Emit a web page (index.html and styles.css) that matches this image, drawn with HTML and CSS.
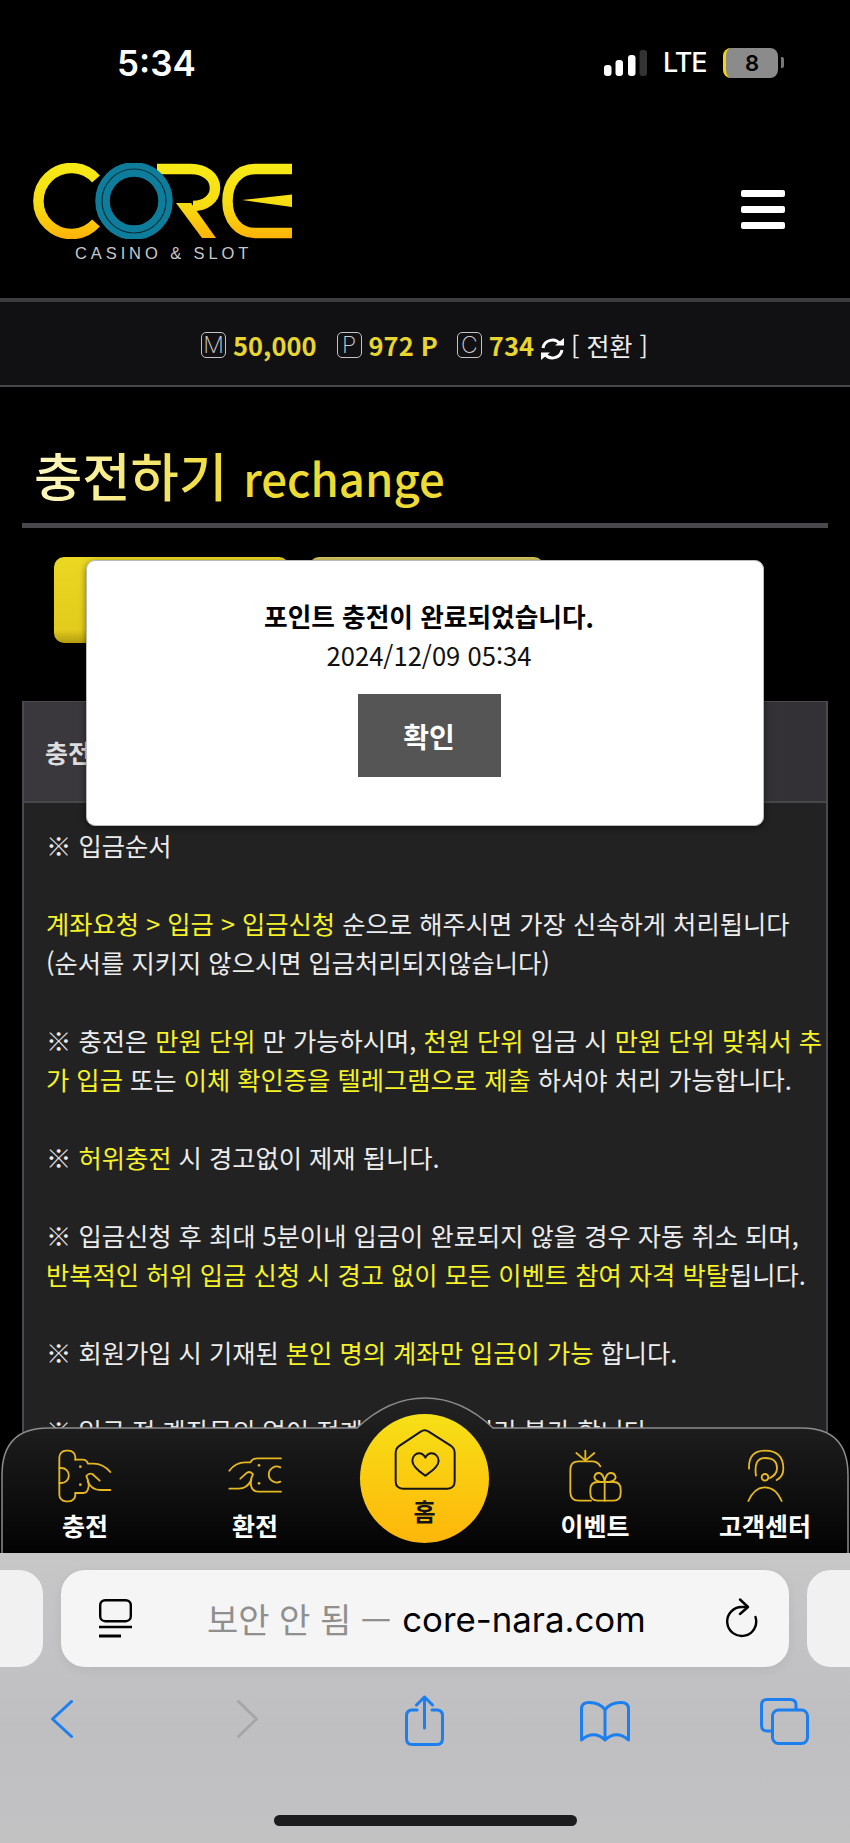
FILE: index.html
```html
<!DOCTYPE html>
<html lang="ko">
<head>
    <meta charset="UTF-8">
    <meta name="viewport" content="width=device-width, initial-scale=1.0">
    <title>CORE Casino &amp; Slot - 충전하기</title>
    <link rel="stylesheet" href="styles.css">
</head>
<body>
    <div class="page">
        <div class="content">
            <header class="top">
                <!-- Status bar -->
                <div class="status">
                    <span class="time">5:34</span>
                    <div class="status-right">
                        <svg class="signal" width="43" height="26" viewBox="0 0 43 26">
                            <rect x="0" y="15" width="7.5" height="11" rx="3" fill="#fff"/>
                            <rect x="11.5" y="10" width="7.5" height="16" rx="3" fill="#fff"/>
                            <rect x="24" y="5" width="7.5" height="21" rx="3" fill="#fff"/>
                            <rect x="35.5" y="0" width="7.5" height="26" rx="3" fill="#333"/>
                        </svg>
                        <span class="lte">LTE</span>
                        <div class="battery"><span class="battery-num">8</span></div>
                    </div>
                </div>
                <div class="brand-row">
                    <div class="brand">
                        <svg class="logo" role="img" aria-label="CORE" width="259" height="76" viewBox="0 0 259 76">
                            <defs>
                                <linearGradient id="logoGold" gradientUnits="userSpaceOnUse" x1="0" y1="0" x2="0" y2="76">
                                    <stop offset="0" stop-color="#f6ea16"/>
                                    <stop offset="0.55" stop-color="#f6dd12"/>
                                    <stop offset="1" stop-color="#ffb108"/>
                                </linearGradient>
                            </defs>
                            <g fill="none" stroke="url(#logoGold)" stroke-width="10.500">
                                <path d="M63 16 A33 33 0 1 0 63 60"/>
                                <path d="M124 6 H158 C172 6 182 14 182 25 C182 36 172 43 160 43"/>
                                <path d="M259 6 H222 C205 6 194.500 20 194.500 38 C194.500 56 205 70 222 70 H259"/>
                            </g>
                            <polygon points="143,40 158,40 183,75 169,75" fill="url(#logoGold)"/>
                            <polygon points="209,37 259,31.500 259,44" fill="url(#logoGold)"/>
                            <circle cx="101" cy="38" r="31.500" fill="none" stroke="#0e7d9c" stroke-width="14.500"/>
                            <circle cx="101" cy="38" r="32" fill="none" stroke="#06303c" stroke-width="1.200"/>
                        </svg>
                        <span class="brand-sub">CASINO &amp; SLOT</span>
                    </div>
                    <div class="hamburger"><span></span><span></span><span></span></div>
                </div>
            </header>

            <!-- Money bar -->
            <div class="money">
                <span class="money-badge">M</span><span class="money-val money-first">50,000</span>
                <span class="money-badge">P</span><span class="money-val money-second">972 P</span>
                <span class="money-badge">C</span><span class="money-val">734</span>
                <svg class="money-refresh" width="25" height="24" viewBox="0 0 25 24" fill="none" stroke="#fff" stroke-width="3">
                    <path d="M3 11 A9.500 9.500 0 0 1 20 7"/>
                    <path d="M22 13 A9.500 9.500 0 0 1 5 17"/>
                    <path d="M15 8.500 H24 V1 Z" fill="#fff" stroke="none"/>
                    <path d="M10 15.500 H1 V23 Z" fill="#fff" stroke="none"/>
                </svg>
                <span class="money-switch">[ 전환 ]</span>
            </div>

            <h1 class="title"><span class="title-ko">충전하기</span><span class="title-en">rechange</span></h1>

            <div class="tabs">
                <a class="tab tab-on"></a>
                <a class="tab tab-off"></a>
            </div>

            <section class="panel">
                <div class="panel-head">충전신청</div>
                <div class="panel-body">
                    <p>※ 입금순서</p>
                    <p><span class="hl">계좌요청 &gt; 입금 &gt; 입금신청</span> 순으로 해주시면 가장 신속하게 처리됩니다<br>(순서를 지키지 않으시면 입금처리되지않습니다)</p>
                    <p>※ 충전은 <span class="hl">만원 단위</span> 만 가능하시며, <span class="hl">천원 단위</span> 입금 시 <span class="hl">만원 단위 맞춰서 추<br>가 입금</span> 또는 <span class="hl">이체 확인증을 텔레그램으로 제출</span> 하셔야 처리 가능합니다.</p>
                    <p>※ <span class="hl">허위충전</span> 시 경고없이 제재 됩니다.</p>
                    <p>※ 입금신청 후 최대 5분이내 입금이 완료되지 않을 경우 자동 취소 되며,<br><span class="hl">반복적인 허위 입금 신청 시 경고 없이 모든 이벤트 참여 자격 박탈</span>됩니다.</p>
                    <p>※ 회원가입 시 기재된 <span class="hl">본인 명의 계좌만 입금이 가능</span> 합니다.</p>
                    <p>※ 입금 전 계좌문의 없이 전계좌 입금시 처리 불가 합니다.</p>
                </div>
            </section>

            <!-- Bottom nav floats over the page -->
            <nav class="nav">
                <svg class="nav-bg" width="850" height="156" viewBox="0 0 850 156">
                    <defs>
                        <linearGradient id="navFill" x1="0" y1="0" x2="0" y2="1">
                            <stop offset="0" stop-color="#232323"/>
                            <stop offset="1" stop-color="#030303"/>
                        </linearGradient>
                    </defs>
                    <path d="M2 156 V78 Q2 31 48 31 H357 C378 11 400 1 425 1 C450 1 472 11 493 31 H802 Q848 31 848 78 V156" fill="url(#navFill)" stroke="#8c8c8c" stroke-width="1.500"/>
                </svg>
                <a class="nav-item">
                    <span class="nav-icon">
                        <svg width="57" height="55" viewBox="20 50 171 165" fill="none" stroke="#e6b820" stroke-width="5.500" stroke-linecap="round" stroke-linejoin="round">
                            <path d="M75 85 V78 A20 20 0 0 0 55 58 H47 A20 20 0 0 0 27 78 V190 A20 20 0 0 0 47 210 H55 A20 20 0 0 0 75 190 V185"/>
                            <path d="M27 110 H33 A22 22 0 0 1 33 155 H27"/>
                            <path d="M75 85 H98 Q108 85 113 97 H130 C150 97 165 105 180 122"/>
                            <path d="M75 185 H100 Q108 185 112 176 Q120 160 108 134 Q116 124 126 128 L148 148"/>
                            <path d="M112 150 Q124 176 150 176 H180"/>
                            <circle cx="90" cy="106" r="4" fill="#e6b820" stroke="none"/>
                            <circle cx="90" cy="160" r="4" fill="#e6b820" stroke="none"/>
                        </svg>
                    </span>
                    <span class="nav-label">충전</span>
                </a>
                <a class="nav-item">
                    <span class="nav-icon">
                        <svg width="57" height="39" viewBox="530 78 171 117" fill="none" stroke="#e6b820" stroke-width="5.500" stroke-linecap="round" stroke-linejoin="round">
                            <path d="M692 85 H622 Q606 85 600 97 H585 Q555 97 537 122"/>
                            <path d="M692 185 H625 Q608 185 603 170 Q598 150 608 133 Q600 122 590 128 L570 146"/>
                            <path d="M603 150 Q590 176 565 176 H537"/>
                            <path d="M690 112 A24 24 0 1 0 690 155"/>
                            <circle cx="626" cy="106" r="4" fill="#e6b820" stroke="none"/>
                            <circle cx="626" cy="160" r="4" fill="#e6b820" stroke="none"/>
                        </svg>
                    </span>
                    <span class="nav-label">환전</span>
                </a>
                <a class="nav-item nav-home">
                    <svg width="62" height="62" viewBox="160 105 186 186" fill="none" stroke="#151515" stroke-width="6" stroke-linejoin="round">
                        <path d="M240 116 Q252 108 264 116 L330 158 Q342 166 342 180 V265 Q342 287 320 287 H187 Q165 287 165 265 V180 Q165 166 177 158 Z"/>
                        <path d="M254 248 C240 238 215 222 215 203 C215 190 225 181 235 181 C244 181 250 186 254 194 C258 186 264 181 273 181 C283 181 294 190 294 203 C294 222 268 238 254 248 Z"/>
                    </svg>
                    <span class="nav-home-label">홈</span>
                </a>
                <a class="nav-item">
                    <span class="nav-icon">
                        <svg width="57" height="55" viewBox="440 200 171 165" fill="none" stroke="#e6b820" stroke-width="5.500" stroke-linecap="round" stroke-linejoin="round">
                            <path d="M495 238 L468 215 M495 238 V208 M495 238 L522 215"/>
                            <path d="M540 255 Q532 240 515 240 H475 Q450 240 450 265 V332 Q450 358 475 358 H512"/>
                            <path d="M510 325 Q510 302 532 302 H580 Q601 302 601 325 V335 Q601 358 580 358 H532 Q510 358 510 335 Z"/>
                            <path d="M553 302 V358"/>
                            <path d="M553 302 Q524 302 522 288 Q524 274 537 275 Q550 278 553 302 Q556 278 569 275 Q584 274 586 288 Q584 302 553 302"/>
                        </svg>
                    </span>
                    <span class="nav-label">이벤트</span>
                </a>
                <a class="nav-item">
                    <span class="nav-icon">
                        <svg width="42" height="55" viewBox="972 200 126 165" fill="none" stroke="#e6b820" stroke-width="5.500" stroke-linecap="round" stroke-linejoin="round">
                            <path d="M987 262 Q985 208 1035 208 Q1090 208 1090 262 Q1090 285 1070 296"/>
                            <path d="M1008 283 Q1000 230 1035 230 Q1072 230 1071 262 Q1070 280 1050 290"/>
                            <circle cx="1035" cy="288" r="10"/>
                            <path d="M985 359 Q1003 318 1035 318 Q1067 318 1085 359"/>
                        </svg>
                    </span>
                    <span class="nav-label">고객센터</span>
                </a>
            </nav>

            <!-- Alert -->
            <div class="alert">
                <strong class="alert-title">포인트 충전이 완료되었습니다.</strong>
                <span class="alert-date">2024/12/09 05:34</span>
                <button class="alert-btn">확인</button>
            </div>
        </div>

        <!-- Safari chrome -->
        <div class="browser">
            <div class="url-row">
                <div class="url-side url-side-left"></div>
                <div class="url-bar">
                    <svg class="url-reader" width="33" height="39" viewBox="0 0 33 39" fill="none" stroke="#000">
                        <rect x="1.200" y="1.200" width="30.600" height="21" rx="5" stroke-width="2.400"/>
                        <path d="M0 28 H33" stroke-width="2.400"/>
                        <path d="M0 37 H22" stroke-width="3"/>
                    </svg>
                    <span class="url-note">보안 안 됨 —</span>
                    <span class="url-host">core-nara.com</span>
                    <svg class="url-reload" width="33" height="40" viewBox="0 0 33 40" fill="none" stroke="#000" stroke-width="2.400" stroke-linecap="round" stroke-linejoin="round">
                        <path d="M22 9 H17 A14.500 14.500 0 1 0 30.500 19"/>
                        <path d="M15 1.500 L23 9 L15 16"/>
                    </svg>
                </div>
                <div class="url-side url-side-right"></div>
            </div>
            <div class="tools">
                <svg class="tool tool-back" width="22" height="38" viewBox="0 0 22 38" fill="none" stroke="#1b7ff0" stroke-width="3" stroke-linecap="round" stroke-linejoin="round">
                    <path d="M20.500 1.500 L1.500 19 L20.500 36.500"/>
                </svg>
                <svg class="tool tool-forward" width="21" height="38" viewBox="0 0 21 38" fill="none" stroke="#a6a6a8" stroke-width="3" stroke-linecap="round" stroke-linejoin="round">
                    <path d="M1.500 1.500 L19.500 19 L1.500 36.500"/>
                </svg>
                <svg class="tool tool-share" width="39" height="51" viewBox="0 0 39 51" fill="none" stroke="#1b7ff0" stroke-width="3" stroke-linecap="round" stroke-linejoin="round">
                    <path d="M12 15 H7 Q1.500 15 1.500 21 V43.500 Q1.500 49.500 7 49.500 H32 Q37.500 49.500 37.500 43.500 V21 Q37.500 15 32 15 H27"/>
                    <path d="M19.500 33 V2 M11.500 10 L19.500 2 L27.500 10"/>
                </svg>
                <svg class="tool tool-book" width="50" height="41" viewBox="0 0 50 41" fill="none" stroke="#1b7ff0" stroke-width="3" stroke-linecap="round" stroke-linejoin="round">
                    <path d="M25 9 C21 3 14 1.500 9 1.500 C5 1.500 1.500 3 1.500 8 V39 C9 32 18 32 25 39 C32 32 41 32 48.500 39 V8 C48.500 3 45 1.500 41 1.500 C36 1.500 29 3 25 9 V38"/>
                </svg>
                <svg class="tool tool-tabs" width="49" height="47" viewBox="0 0 49 47" fill="none" stroke="#1b7ff0" stroke-width="3" stroke-linejoin="round">
                    <rect x="12.500" y="12" width="35" height="33.500" rx="6"/>
                    <path d="M12.500 33 H7 Q1.500 33 1.500 27 V7 Q1.500 1.500 7 1.500 H30 Q36 1.500 36 7 V12"/>
                </svg>
            </div>
            <div class="home-bar"></div>
        </div>
    </div>
</body>
</html>
```

FILE: styles.css
```css
* {
    box-sizing: border-box;
}
body {
    margin: 0;
    background: #000;
    font-family: "Noto Sans CJK KR", "Noto Sans", sans-serif;
    color: #eee;
}
.page {
    width: 850px;
    height: 1843px;
    display: flex;
    flex-direction: column;
    overflow: hidden;
}
.content {
    position: relative;
    flex: 1;
    overflow: hidden;
    background: #000;
}

/* top */
.top {
    height: 298px;
}
.status {
    height: 130px;
    padding: 44px 72px 0 117px;
    display: flex;
    justify-content: space-between;
    align-items: flex-start;
}
.time {
    font-family: Inter, sans-serif;
    font-size: 35px;
    font-weight: 600;
    line-height: 38px;
    color: #fff;
}
.status-right {
    display: flex;
    align-items: center;
    padding-top: 4px;
}
.signal {
    margin-right: 16px;
}
.lte {
    font-family: Inter, sans-serif;
    font-size: 27px;
    font-weight: 500;
    line-height: 30px;
    width: 60px;
    color: #fff;
    letter-spacing: -1px;
}
.battery {
    position: relative;
    width: 55px;
    height: 30px;
    border-radius: 8px;
    background: #8b8b8b;
    border-left: 3px solid #f6d21c;
    text-align: center;
}
.battery::after {
    content: "";
    position: absolute;
    right: -6px;
    top: 9px;
    width: 3px;
    height: 11px;
    border-radius: 0 2px 2px 0;
    background: #777;
}
.battery-num {
    font-family: Inter, sans-serif;
    font-size: 22px;
    font-weight: 600;
    line-height: 30px;
    color: #000;
}
.brand-row {
    display: flex;
    justify-content: space-between;
    align-items: center;
    padding: 33px 65px 0 33px;
}
.brand {
    display: flex;
    flex-direction: column;
}
.logo {
    display: block;
}
.brand-sub {
    margin: 6px 0 0 42px;
    font-family: "Liberation Sans", sans-serif;
    font-size: 16.5px;
    line-height: 16px;
    letter-spacing: 3.9px;
    color: #c8c8c8;
}
.hamburger {
    display: flex;
    flex-direction: column;
    gap: 9px;
    width: 44px;
    margin-bottom: 5px;
}
.hamburger span {
    height: 7px;
    border-radius: 2px;
    background: #fff;
}

/* money */
.money {
    height: 89px;
    padding: 2px 0 0 201px;
    display: flex;
    align-items: center;
    background: #111114;
    border-top: 4px solid #3b3b40;
    border-bottom: 2px solid #48484c;
}
.money-badge {
    width: 25px;
    height: 26px;
    margin-right: 7px;
    border: 1px solid #c4c4c4;
    border-radius: 5px;
    font-family: Inter, sans-serif;
    font-size: 23px;
    font-weight: 200;
    line-height: 24px;
    text-align: center;
    color: #ccc;
}
.money-val {
    font-size: 25.5px;
    font-weight: 700;
    line-height: 30px;
    color: #e8d52e;
}
.money-first {
    margin-right: 20px;
}
.money-second {
    margin-right: 19px;
}
.money-refresh {
    margin: 8px 6px 0 6px;
}
.money-switch {
    font-size: 25px;
    line-height: 30px;
    color: #eee;
}

/* title */
.title {
    height: 141px;
    margin: 0 22px;
    padding: 55px 0 0 12px;
    border-bottom: 5px solid #48484c;
    font-weight: 500;
    line-height: 64px;
    white-space: nowrap;
}
.title-ko {
    font-size: 52.5px;
    background: linear-gradient(90deg, #fdf8c4, #eedb34);
    -webkit-background-clip: text;
    background-clip: text;
    color: transparent;
}
.title-en {
    margin-left: 16px;
    font-size: 45.5px;
    color: #eedb34;
}

/* tabs */
.tabs {
    display: flex;
    gap: 20px;
    margin: 29px 0 0 54px;
}
.tab {
    width: 235px;
    height: 86px;
    border-radius: 10px;
}
.tab-on {
    background: linear-gradient(#ebd822, #e2cb1c 85%, #b39c10);
}
.tab-off {
    background: linear-gradient(#d6c860, #c2b03c);
}

/* panel */
.panel {
    margin: 58px 22px 0;
    background: #222223;
    border: 1px solid #4a4a4e;
    border-width: 0 2px;
}
.panel-head {
    height: 102px;
    padding-left: 21px;
    background: linear-gradient(90deg, #3a383c, #333136);
    border-top: 1px solid #4a4a4e;
    border-bottom: 2px solid #47464a;
    font-size: 25px;
    font-weight: 700;
    line-height: 100px;
    color: #ddd;
}
.panel-body {
    padding: 23px 0 0 22px;
    font-size: 25.3px;
    line-height: 39px;
    white-space: nowrap;
    color: #ececec;
}
.panel-body p {
    margin: 0 0 39px;
}
.hl {
    color: #f6f226;
}

/* nav */
.nav {
    position: absolute;
    left: 0;
    bottom: 0;
    width: 850px;
    height: 156px;
    display: grid;
    grid-template-columns: repeat(5, 170px);
    padding-top: 52px;
}
.nav-bg {
    position: absolute;
    left: 0;
    top: 0;
}
.nav-item {
    position: relative;
    display: flex;
    flex-direction: column;
    align-items: center;
}
.nav-icon {
    height: 52px;
    display: flex;
    align-items: center;
    justify-content: center;
}
.nav-label {
    margin-top: 6px;
    font-size: 25px;
    font-weight: 700;
    line-height: 36px;
    color: #fff;
}
.nav-home {
    width: 129px;
    height: 129px;
    margin: -35px 0 0 20px;
    padding-top: 14px;
    border-radius: 50%;
    background: linear-gradient(#f6e016, #ffb60a);
}
.nav-home-label {
    margin-top: 6px;
    font-size: 24px;
    font-weight: 700;
    line-height: 30px;
    color: #151515;
}

/* alert */
.alert {
    position: absolute;
    left: 86px;
    top: 560px;
    width: 678px;
    height: 266px;
    display: flex;
    flex-direction: column;
    align-items: center;
    padding: 38px 0 0 8px;
    background: #fff;
    border: 1px solid #bbb;
    border-radius: 9px;
    box-shadow: 0 2px 6px rgba(0, 0, 0, 0.5);
}
.alert-title {
    font-size: 25.7px;
    font-weight: 700;
    line-height: 34px;
    color: #000;
}
.alert-date {
    margin-top: 5px;
    font-size: 25.6px;
    line-height: 34px;
    color: #111;
}
.alert-btn {
    width: 143px;
    height: 83px;
    margin-top: 22px;
    background: #555;
    border: none;
    font-family: inherit;
    font-size: 28px;
    font-weight: 700;
    color: #fff;
}

/* browser chrome */
.browser {
    position: relative;
    height: 290px;
    padding-top: 17px;
    background: linear-gradient(#c7c7c8, #bfbec1 60%, #c2c2c3);
}
.url-row {
    display: flex;
    gap: 18px;
    height: 97px;
}
.url-side {
    flex: 1;
    background: #f1f1f2;
}
.url-side-left {
    flex: none;
    width: 43px;
    border-radius: 0 24px 24px 0;
}
.url-side-right {
    border-radius: 24px 0 0 24px;
}
.url-bar {
    width: 728px;
    display: flex;
    align-items: center;
    padding-left: 38px;
    background: #f5f5f6;
    border-radius: 24px;
    box-shadow: 0 3px 12px rgba(0, 0, 0, 0.06);
}
.url-reader {
    margin-right: 75px;
}
.url-note {
    font-size: 34px;
    line-height: 44px;
    color: #8f8f8f;
}
.url-host {
    margin-left: 11px;
    font-family: Inter, sans-serif;
    font-size: 34.8px;
    line-height: 44px;
    color: #000;
}
.url-reload {
    position: absolute;
    left: 725px;
    top: 45px;
}
.tools {
    display: flex;
    align-items: flex-start;
    height: 80px;
    padding-top: 28px;
}
.tool-back {
    margin: 5px 0 0 51px;
}
.tool-forward {
    margin: 5px 0 0 164px;
}
.tool-share {
    margin-left: 147px;
}
.tool-book {
    margin: 6px 0 0 136px;
}
.tool-tabs {
    margin: 3px 0 0 130px;
}
.home-bar {
    position: absolute;
    left: 274px;
    top: 262px;
    width: 303px;
    height: 11px;
    border-radius: 6px;
    background: #1c1c1e;
}
```
